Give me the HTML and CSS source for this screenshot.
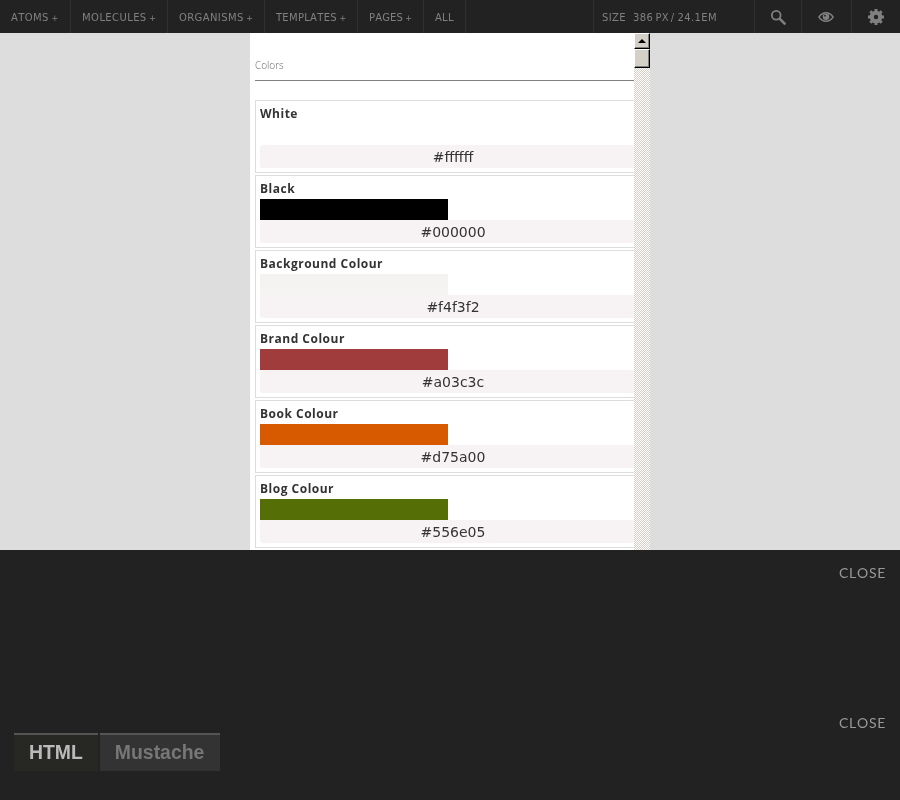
FILE: index.html
```html
<!DOCTYPE html>
<html lang="en">
<head>
    <meta charset="UTF-8">
    <title>Pattern Lab</title>
    <link rel="stylesheet" href="styles.css">
</head>
<body>
    <div class="header">
        <ul class="nav">
            <li class="nav-atoms">ATOMS <span class="plus">+</span></li>
            <li>MOLECULES <span class="plus">+</span></li>
            <li>ORGANISMS <span class="plus">+</span></li>
            <li class="nav-templates">TEMPLATES <span class="plus">+</span></li>
            <li class="nav-pages">PAGES <span class="plus">+</span></li>
            <li>ALL</li>
        </ul>
        <div class="controls">
            <div class="size">SIZE<span class="size-val">386</span><span class="size-unit">PX /</span><span class="size-em">24.1</span><span>EM</span></div>
            <div class="ctrl">
                <svg width="16" height="16" viewBox="0 0 16 16"><circle cx="6.2" cy="6.2" r="4.4" fill="none" stroke="#808080" stroke-width="1.8"/><path d="M9.6 9.6l5 5" stroke="#808080" stroke-width="2.6" stroke-linecap="round"/></svg>
            </div>
            <div class="ctrl ctrl-eye">
                <svg width="16" height="12" viewBox="0 0 16 12"><path d="M0 6c2-3.4 5-5 8-5s6 1.600 8 5c-2 3.400-5 5-8 5s-6-1.600-8-5z" fill="#808080"/><path d="M1.800 6c1.700-2.300 3.800-3.600 6.200-3.600s4.500 1.300 6.200 3.600c-1.700 2.300-3.800 3.600-6.200 3.600s-4.500-1.300-6.200-3.600z" fill="#222"/><circle cx="8" cy="5.700" r="3.300" fill="#808080"/><circle cx="7" cy="4.700" r=".9" fill="#222"/></svg>
            </div>
            <div class="ctrl ctrl-gear">
                <svg width="16" height="16" viewBox="0 0 16 16"><circle cx="8" cy="8" r="4.600" fill="none" stroke="#808080" stroke-width="3.400"/><path d="M8 0v16M0 8h16M2.300 2.300l11.400 11.400M13.700 2.300L2.300 13.700" stroke="#808080" stroke-width="3"/><circle cx="8" cy="8" r="2.200" fill="#222"/></svg>
            </div>
        </div>
    </div>

    <div class="stage">
        <div class="viewport">
            <div class="page">
                <h2 class="section-title">Colors</h2>
                <div class="swatch">
                    <h3>White</h3>
                    <div class="chip chip-white"></div>
                    <div class="code">#ffffff</div>
                </div>
                <div class="swatch">
                    <h3>Black</h3>
                    <div class="chip chip-black"></div>
                    <div class="code">#000000</div>
                </div>
                <div class="swatch">
                    <h3>Background Colour</h3>
                    <div class="chip chip-bg"></div>
                    <div class="code">#f4f3f2</div>
                </div>
                <div class="swatch">
                    <h3>Brand Colour</h3>
                    <div class="chip chip-brand"></div>
                    <div class="code">#a03c3c</div>
                </div>
                <div class="swatch">
                    <h3>Book Colour</h3>
                    <div class="chip chip-book"></div>
                    <div class="code">#d75a00</div>
                </div>
                <div class="swatch">
                    <h3>Blog Colour</h3>
                    <div class="chip chip-blog"></div>
                    <div class="code">#556e05</div>
                </div>
                <div class="swatch"></div>
            </div>
            <div class="scrollbar">
                <div class="sb-btn"><span class="sb-arrow"></span></div>
                <div class="sb-thumb"></div>
            </div>
        </div>
    </div>

    <div class="drawer">
        <div class="close-row">CLOSE</div>
        <div class="drawer-bottom">
            <div class="tabs">
                <div class="tab tab-active">HTML</div>
                <div class="tab tab-mustache">Mustache</div>
            </div>
            <div class="close-two">CLOSE</div>
        </div>
    </div>
</body>
</html>
```

FILE: styles.css
```css
*{
    margin: 0;
    padding: 0;
    box-sizing: border-box;
    list-style: none;
}
html,body{
    height: 800px;
    overflow: hidden;
}
body{
    background-color: #ddd;
    font-family: "DejaVu Sans", sans-serif;
    font-kerning: none;
    display: flex;
    flex-direction: column;
}

/* top bar */
.header{
    height: 33px;
    background-color: #222;
    color: #808080;
    font-size: 10px;
    letter-spacing: .4px;
    display: flex;
    justify-content: space-between;
    will-change: transform;
}
.nav{
    display: flex;
}
.nav li{
    height: 33px;
    padding: 0 11px;
    line-height: 36px;
    border-right: 1px solid #303030;
}
.nav .nav-atoms{
    padding-right: 12px;
}
.nav .nav-templates{
    letter-spacing: .3px;
}
.nav .nav-pages{
    letter-spacing: .1px;
}
.plus{
    font-size: 8px;
    letter-spacing: 0;
    margin-left: -1px;
}
.controls{
    display: flex;
}
.size{
    width: 162px;
    height: 33px;
    padding-left: 8px;
    line-height: 36px;
    border-left: 1px solid #303030;
    border-right: 1px solid #303030;
    white-space: nowrap;
}
.size-val{
    margin-left: 7px;
}
.size-unit{
    margin-left: 2px;
    word-spacing: -2px;
}
.size-em{
    margin-left: 3px;
}
.ctrl{
    width: 47px;
    display: flex;
    align-items: center;
    justify-content: center;
    border-right: 1px solid #303030;
}
.ctrl-eye{
    width: 50px;
    padding-right: 1px;
}
.ctrl-gear{
    border-right: none;
    width: 48px;
    padding-right: 1px;
}

/* resizable viewport */
.stage{
    height: 517px;
    display: flex;
    justify-content: center;
}
.viewport{
    width: 400px;
    position: relative;
    background-color: #fff;
    overflow: hidden;
}
.page{
    padding: 0 2px 0 5px;
    will-change: transform;
}
.section-title{
    font-family: "Open Sans", sans-serif;
    font-weight: 300;
    font-size: 10px;
    color: #666;
    height: 48px;
    padding-top: 25px;
    border-bottom: 1px solid #808080;
    margin-bottom: 19px;
}
.swatch{
    height: 73px;
    margin-bottom: 2px;
    padding: 4px 0 4px 4px;
    border: 1px solid #ddd;
    border-right: none;
    color: #333;
}
.swatch h3{
    font-family: "Open Sans", sans-serif;
    font-size: 12px;
    letter-spacing: .5px;
    line-height: 18px;
    height: 19px;
    color: #333;
}
.chip{
    width: 188px;
    height: 21px;
}
.chip-white{ background-color: #fff; }
.chip-black{ background-color: #000; }
.chip-bg{ background-color: #f4f3f2; }
.chip-brand{ background-color: #a03c3c; }
.chip-book{ background-color: #d75a00; }
.chip-blog{ background-color: #556e05; }
.code{
    height: 23px;
    line-height: 25px;
    background-color: #f7f2f4;
    border-radius: 3px 0 0 3px;
    font-size: 14px;
    text-align: center;
    padding-right: 2px;
}

/* old style scrollbar, sits over the page */
.scrollbar{
    position: absolute;
    top: 0;
    right: 0;
    bottom: 0;
    width: 16px;
    background: url("data:image/svg+xml,%3Csvg xmlns='http://www.w3.org/2000/svg' width='2' height='2' shape-rendering='crispEdges'%3E%3Crect width='2' height='2' fill='%23fff'/%3E%3Crect width='1' height='1' fill='%23d4d0c8'/%3E%3Crect x='1' y='1' width='1' height='1' fill='%23d4d0c8'/%3E%3C/svg%3E");
}
.sb-btn,.sb-thumb{
    background-color: #d4d0c8;
    border: 1px solid;
    border-color: #fff #000 #000 #fff;
    box-shadow: inset -1px -1px 0 #808080;
}
.sb-btn{
    height: 16px;
    display: flex;
    align-items: center;
    justify-content: center;
}
.sb-arrow{
    border: 4px solid transparent;
    border-top: none;
    border-bottom-color: #000;
}
.sb-thumb{
    height: 19px;
}

/* code drawer */
.drawer{
    flex: 1;
    background-color: #222;
    color: #808080;
    font-family: "Lato", sans-serif;
    display: flex;
    flex-direction: column;
    justify-content: space-between;
    will-change: transform;
}
.close-row,.close-two{
    font-size: 14px;
    letter-spacing: .7px;
    color: #999;
}
.close-row{
    text-align: right;
    padding: 14px 14px 0 0;
}
.drawer-bottom{
    display: flex;
    justify-content: space-between;
    align-items: flex-start;
    padding: 0 14px 29px;
}
.close-two{
    margin-top: -19px;
}
.tabs{
    display: flex;
    gap: 2px;
}
.tab{
    height: 38px;
    padding: 0 15px;
    border-top: 2px solid #555;
    background-color: #333;
    color: #777;
    font-family: "Liberation Sans", sans-serif;
    font-size: 19.4px;
    font-weight: bold;
    line-height: 35px;
}
.tab-mustache{
    padding-right: 16px;
}
.tab-active{
    background-color: #272723;
    color: #bbb;
}
```
